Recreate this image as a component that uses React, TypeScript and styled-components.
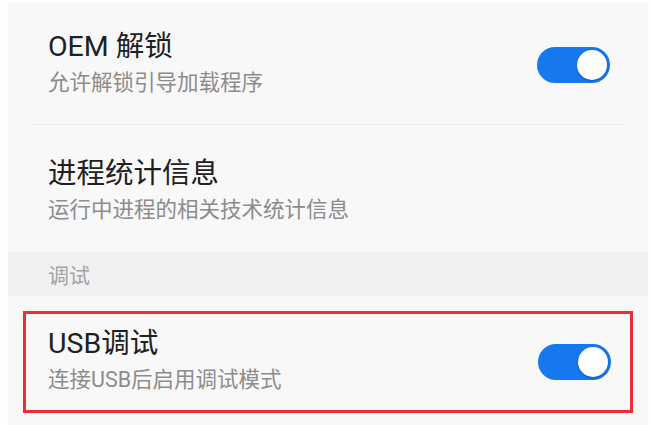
import React from "react";
import styled, { createGlobalStyle } from "styled-components";

const Global = createGlobalStyle`
  html, body { margin: 0; padding: 0; background: #fdfdfd; }
  body { font-family: Roboto, "Noto Sans CJK SC", sans-serif; }
`;

const Frame = styled.div`
  width: 650px;
  height: 425px;
  box-sizing: border-box;
  padding: 3px 2px 0 8px;
  overflow: hidden;
`;

const Panel = styled.div`
  background: #f8f8f8;
  height: 100%;
  display: flex;
  flex-direction: column;
`;

const Row = styled.div<{ $pt: number; $pb: number }>`
  display: flex;
  align-items: center;
  justify-content: space-between;
  padding: ${(p) => p.$pt}px 38px ${(p) => p.$pb}px 40px;
`;

const Texts = styled.div`
  display: flex;
  flex-direction: column;
`;

const Title = styled.div`
  font-size: 28.5px;
  line-height: 36px;
  color: #202020;
`;

const Sub = styled.div`
  font-size: 21.5px;
  line-height: 36px;
  color: #8c8c8c;
`;

const Divider = styled.div`
  height: 1px;
  background: #ececec;
  margin: 0 25px 0 24px;
`;

const SectionHeader = styled.div`
  height: 44px;
  background: #f1f1f1;
  display: flex;
  align-items: center;
  padding-left: 40px;
  font-size: 21px;
  color: #a3a3a3;
`;

const Highlight = styled.div`
  margin: 15px 15px 0 15px;
  border: 3px solid #ec2f35;
  display: flex;
  align-items: center;
  justify-content: space-between;
  padding: 12px 19px 12px 22px;
`;

const Track = styled.div`
  width: 73px;
  height: 36px;
  border-radius: 18px;
  background: #1677ef;
  display: flex;
  align-items: center;
  justify-content: flex-end;
  padding: 0 3px;
  box-sizing: border-box;
  flex-shrink: 0;
`;

const Knob = styled.div`
  width: 30px;
  height: 30px;
  border-radius: 50%;
  background: #ffffff;
  box-shadow: 0 1px 2px rgba(0, 40, 120, 0.45);
`;

const Toggle = () => (
  <Track>
    <Knob />
  </Track>
);

export default function App() {
  return (
    <>
      <Global />
      <Frame>
        <Panel>
          <Row $pt={26} $pb={23}>
            <Texts>
              <Title>OEM 解锁</Title>
              <Sub>允许解锁引导加载程序</Sub>
            </Texts>
            <Toggle />
          </Row>
          <Divider />
          <Row $pt={31} $pb={24}>
            <Texts>
              <Title>进程统计信息</Title>
              <Sub>运行中进程的相关技术统计信息</Sub>
            </Texts>
          </Row>
          <SectionHeader>调试</SectionHeader>
          <Highlight>
            <Texts>
              <Title>USB调试</Title>
              <Sub>连接USB后启用调试模式</Sub>
            </Texts>
            <Toggle />
          </Highlight>
        </Panel>
      </Frame>
    </>
  );
}
